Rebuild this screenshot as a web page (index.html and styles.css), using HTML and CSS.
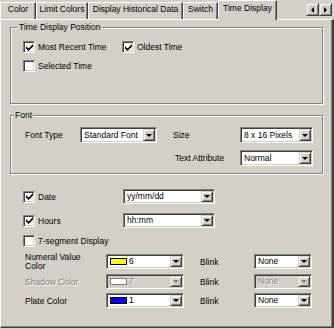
FILE: index.html
```html
<!DOCTYPE html>
<html>
<head>
<meta charset="utf-8">
<link rel="stylesheet" href="styles.css">
</head>
<body>
<div class="tabs">
  <div class="tab w-color">Color</div>
  <div class="tab w-limit">Limit Colors</div>
  <div class="tab w-hist">Display Historical Data</div>
  <div class="tab w-switch">Switch</div>
  <div class="tab sel w-time">Time Display</div>
  <div class="scroll">
    <div class="sbtn"><span class="tri-l"></span></div>
    <div class="sbtn"><span class="tri-r"></span></div>
  </div>
</div>
<div class="panel">
  <div class="group g1">
    <div class="legend l1">Time Display Position</div>
    <div class="cbrow first">
      <div class="cb-item w99"><span class="cb"><svg width="7" height="7" viewBox="0 0 7 7"><path d="M0 2.2 L2.5 4.6 L7 0 V2.6 L2.5 7 L0 4.6 Z" fill="#000"/></svg></span><span>Most Recent Time</span></div>
      <div class="cb-item"><span class="cb"><svg width="7" height="7" viewBox="0 0 7 7"><path d="M0 2.2 L2.5 4.6 L7 0 V2.6 L2.5 7 L0 4.6 Z" fill="#000"/></svg></span><span>Oldest Time</span></div>
    </div>
    <div class="cbrow second">
      <div class="cb-item"><span class="cb"></span><span>Selected Time</span></div>
    </div>
  </div>

  <div class="group g2">
    <div class="legend l2">Font</div>
    <div class="fontgrid">
      <div class="lbl">Font Type</div>
      <div class="combo"><div class="val">Standard Font</div><div class="btn"><span class="arrow"></span></div></div>
      <div></div>
      <div class="lbl">Size</div>
      <div class="combo"><div class="val">8 x 16 Pixels</div><div class="btn"><span class="arrow"></span></div></div>
      <div></div><div></div><div></div>
      <div class="lbl ta">Text Attribute</div>
      <div class="combo"><div class="val">Normal</div><div class="btn"><span class="arrow"></span></div></div>
    </div>
  </div>

  <div class="r3 date">
    <div class="cb-item w100"><span class="cb"><svg width="7" height="7" viewBox="0 0 7 7"><path d="M0 2.2 L2.5 4.6 L7 0 V2.6 L2.5 7 L0 4.6 Z" fill="#000"/></svg></span><span>Date</span></div>
    <div class="combo c92"><div class="val">yy/mm/dd</div><div class="btn"><span class="arrow"></span></div></div>
  </div>
  <div class="r3 hours">
    <div class="cb-item w100"><span class="cb"><svg width="7" height="7" viewBox="0 0 7 7"><path d="M0 2.2 L2.5 4.6 L7 0 V2.6 L2.5 7 L0 4.6 Z" fill="#000"/></svg></span><span>Hours</span></div>
    <div class="combo c92"><div class="val">hh:mm</div><div class="btn"><span class="arrow"></span></div></div>
  </div>
  <div class="r3 seg">
    <div class="cb-item"><span class="cb"></span><span>7-segment Display</span></div>
  </div>

  <div class="crow numeral">
    <div class="clbl two">Numeral Value<br>Color</div>
    <div class="combo c78"><div class="val"><span class="sw yellow"></span>6</div><div class="btn"><span class="arrow"></span></div></div>
    <div class="blbl">Blink</div>
    <div class="combo c58"><div class="val">None</div><div class="btn"><span class="arrow"></span></div></div>
  </div>
  <div class="crow shadow">
    <div class="clbl dis">Shadow Color</div>
    <div class="combo c78 off"><div class="val"><span class="sw white"></span>7</div><div class="btn"><span class="arrow"></span></div></div>
    <div class="blbl">Blink</div>
    <div class="combo c58 off"><div class="val">None</div><div class="btn"><span class="arrow"></span></div></div>
  </div>
  <div class="crow plate">
    <div class="clbl">Plate Color</div>
    <div class="combo c78"><div class="val"><span class="sw blue"></span>1</div><div class="btn"><span class="arrow"></span></div></div>
    <div class="blbl">Blink</div>
    <div class="combo c58"><div class="val">None</div><div class="btn"><span class="arrow"></span></div></div>
  </div>
</div>
</body>
</html>
```
FILE: styles.css
```css
* { box-sizing: border-box; }
html, body { margin: 0; padding: 0; background: #d4d0c8; }
body {
  font-family: "Liberation Sans", Arial, sans-serif;
  font-size: 8.5px;
  color: #000;
  width: 334px;
  height: 329px;
  overflow: hidden;
}

/* tabs */
.tabs { display: flex; align-items: flex-end; height: 19px; position: relative; z-index: 1; }
.tab {
  height: 17px;
  border-top: 1px solid #fff;
  border-left: 1px solid #fff;
  border-right: 1px solid #404040;
  box-shadow: inset -1px 0 #808080;
  text-align: center;
  line-height: 12px;
  white-space: nowrap;
  background: #d4d0c8;
}
.tab.sel { height: 20px; margin-bottom: -1px; line-height: 14px; }
.w-color { width: 36px; }
.w-limit { width: 52px; }
.w-hist { width: 95px; }
.w-switch { width: 35px; }
.w-time { width: 59px; }
.scroll { display: flex; align-self: flex-start; margin: 3px 2px 0 auto; }
.sbtn {
  width: 13px; height: 13px;
  border: 1px solid; border-color: #d4d0c8 #404040 #404040 #d4d0c8;
  box-shadow: inset 1px 1px #fff, inset -1px -1px #808080;
  display: flex; align-items: center; justify-content: center;
}
.tri-l { width: 0; height: 0; border-top: 3px solid transparent; border-bottom: 3px solid transparent; border-right: 3px solid #000; }
.tri-r { width: 0; height: 0; border-top: 3px solid transparent; border-bottom: 3px solid transparent; border-left: 3px solid #000; }

/* panel */
.panel {
  height: 309px;
  border-top: 1px solid #fff;
  border-left: 1px solid #fff;
  border-right: 2px solid #404040;
  border-bottom: 1px solid #404040;
  box-shadow: inset -1px -1px #808080;
}

/* group boxes */
.group {
  margin: 7px 0 0 9px;
  width: 313px;
  border: 1px solid #808080;
  box-shadow: inset 1px 1px #fff, 1px 1px #fff;
}
.g1 { height: 77px; }
.g2 { height: 59px; margin-top: 11px; }
.legend {
  display: table;
  height: 11px;
  line-height: 11px;
  margin-top: -6px;
  background: #d4d0c8;
  white-space: nowrap;
}
.l1 { margin-left: 6px; padding: 0 2px; }
.l2 { margin-left: 3px; padding: 0 1px; }

/* checkboxes */
.cbrow { display: flex; align-items: center; height: 14px; margin-left: 12px; }
.cbrow.first { margin-top: 7px; }
.cbrow.second { margin-top: 5px; }
.cb-item { display: flex; align-items: center; gap: 3px; white-space: nowrap; }
.w99 { width: 99px; }
.w100 { width: 100px; }
.cb {
  width: 12px; height: 12px; flex: none;
  background: #fff;
  border: 1px solid; border-color: #808080 #fff #fff #808080;
  box-shadow: inset 1px 1px #404040, inset -1px -1px #d4d0c8;
  display: flex; align-items: center; justify-content: center;
}
.cb svg { display: block; }

/* font grid */
.fontgrid {
  display: grid;
  grid-template-columns: 55px 77px 16px 67px 73px;
  grid-template-rows: 16px 16px;
  row-gap: 7px;
  margin: 6px 0 0 14px;
  align-items: center;
}
.lbl { white-space: nowrap; }
.lbl.ta { padding-left: 2px; }

/* combos */
.combo {
  display: flex;
  height: 15px;
  background: #fff;
  border: 1px solid; border-color: #808080 #fff #fff #808080;
  box-shadow: inset 1px 1px #404040, inset -1px -1px #d4d0c8;
  padding: 1px;
}
.fontgrid .combo { height: 16px; }
.combo .val {
  flex: 1;
  display: flex; align-items: center;
  padding-left: 2px;
  white-space: nowrap; overflow: hidden;
  line-height: 11px;
}
.combo .btn {
  width: 12px; flex: none;
  background: #d4d0c8;
  border: 1px solid; border-color: #d4d0c8 #404040 #404040 #d4d0c8;
  box-shadow: inset 1px 1px #fff, inset -1px -1px #808080;
  display: flex; align-items: center; justify-content: center;
}
.arrow { width: 0; height: 0; border-left: 3px solid transparent; border-right: 3px solid transparent; border-top: 3px solid #000; }
.combo.off { background: #d4d0c8; }
.combo.off .val { color: #808080; text-shadow: 1px 1px #fff; }
.combo.off .arrow { border-top-color: #808080; }
.c92 { width: 92px; }
.c78 { width: 78px; }
.c58 { width: 58px; }

/* date rows */
.r3 { display: flex; align-items: center; height: 15px; margin-left: 22px; }
.r3.date { margin-top: 15px; }
.r3.hours { margin-top: 9px; }
.r3.seg { margin-top: 5px; }

/* colour rows */
.crow { display: flex; align-items: center; height: 15px; margin-left: 24px; }
.crow.numeral { height: 21px; margin-top: 3px; }
.crow.shadow { margin-top: 2px; }
.crow.plate { margin-top: 4px; }
.clbl { width: 81px; white-space: nowrap; }
.clbl.two { line-height: 9px; }
.clbl.dis { color: #808080; text-shadow: 1px 1px #fff; }
.blbl { width: 54px; margin-left: 16px; }
.sw { width: 17px; height: 7px; border: 1px solid #000; margin-right: 2px; flex: none; }
.yellow { background: #ffff00; }
.blue { background: #0000ff; }
.white { background: #fff; border-color: #808080; }
```
